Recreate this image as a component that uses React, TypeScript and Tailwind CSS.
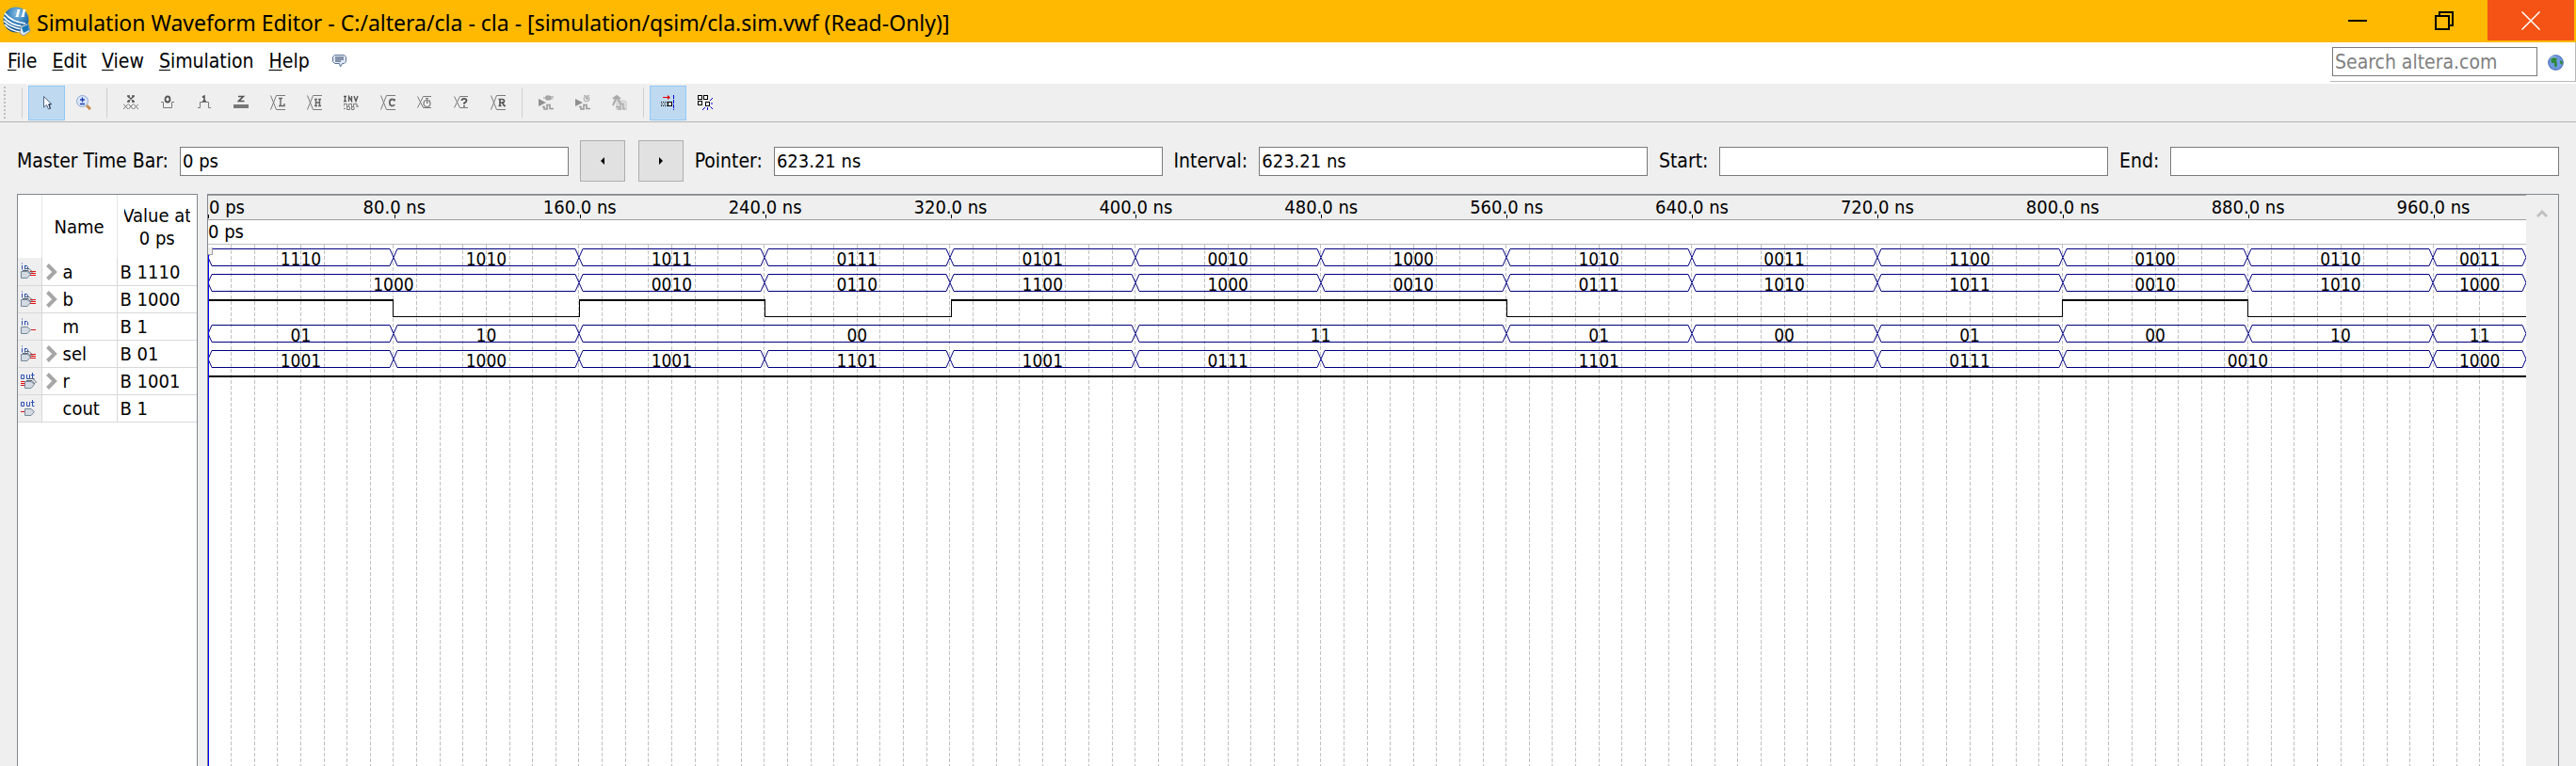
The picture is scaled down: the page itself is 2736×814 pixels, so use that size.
import React from "react";

type Segment = { value: string; span: number };

const seg = (value: string, span = 80): Segment => ({ value, span });

const busA: Segment[] = [
  ...["1110", "1010", "1011", "0111", "0101", "0010", "1000", "1010", "0011", "1100", "0100", "0110"].map((v) => seg(v)),
  seg("0011", 40),
];
const busB: Segment[] = [
  seg("1000", 160),
  ...["0010", "0110", "1100", "1000", "0010", "0111", "1010", "1011", "0010", "1010"].map((v) => seg(v)),
  seg("1000", 40),
];
const bitM: Segment[] = [
  seg("1"), seg("0"), seg("1"), seg("0"), seg("1", 240), seg("0", 240), seg("1"), seg("0", 120),
];
const busSel: Segment[] = [
  seg("01"), seg("10"), seg("00", 240), seg("11", 160), seg("01"), seg("00"), seg("01"), seg("00"), seg("10"), seg("11", 40),
];
const busR: Segment[] = [
  seg("1001"), seg("1000"), seg("1001"), seg("1101"), seg("1001"), seg("0111"), seg("1101", 240), seg("0111"), seg("0010", 160), seg("1000", 40),
];

const signals = [
  { name: "a", value: "B 1110", dir: "in", bus: true },
  { name: "b", value: "B 1000", dir: "in", bus: true },
  { name: "m", value: "B 1", dir: "in", bus: false },
  { name: "sel", value: "B 01", dir: "in", bus: true },
  { name: "r", value: "B 1001", dir: "out", bus: true },
  { name: "cout", value: "B 1", dir: "out", bus: false },
];

function BusRow({ segments }: { segments: Segment[] }) {
  return (
    <div className="flex h-[27px] items-start">
      {segments.map((s, i) => (
        <div key={i} className="flex h-[19px] basis-0" style={{ flexGrow: s.span }}>
          <svg width="4" height="19" viewBox="0 0 4 19" className="shrink-0" stroke="#000080" fill="none">
            <path d="M4 .5 L0 9.5 L4 18.5" />
          </svg>
          <span className="flex-1 border-y border-[#000080] pt-px text-center leading-[18px]">{s.value}</span>
          <svg width="4" height="19" viewBox="0 0 4 19" className="shrink-0" stroke="#000080" fill="none">
            <path d="M0 .5 L4 9.5 L0 18.5" />
          </svg>
        </div>
      ))}
    </div>
  );
}

function BitRow({ segments }: { segments: Segment[] }) {
  return (
    <div className="flex h-[27px] items-start">
      {segments.map((s, i) => (
        <div
          key={i}
          className={
            "h-[19px] basis-0 border-black " +
            (s.value === "1" ? "border-t-2 " : "border-b ") +
            (i > 0 ? "border-l" : "")
          }
          style={{ flexGrow: s.span }}
        />
      ))}
    </div>
  );
}

function Logo() {
  return (
    <svg width="30" height="32" viewBox="0 0 30 32">
      <defs>
        <radialGradient id="ball" cx="0.55" cy="0.25" r="0.8">
          <stop offset="0" stopColor="#8fc3e8" />
          <stop offset="0.5" stopColor="#2f7cb8" />
          <stop offset="1" stopColor="#0a4a86" />
        </radialGradient>
      </defs>
      <circle cx="14" cy="14" r="13.5" fill="url(#ball)" />
      <path d="M1 11 Q8 20 22 21 M1 15 Q8 22 20 24 M2 19 Q9 26 19 27 M2 7 Q9 16 24 18" stroke="#fff" strokeWidth="1.7" fill="none" />
      <path d="M15 3h4l-1 1-1.500 6 .5 1h-4l1-1 1.500-6zM21 3h4l-1 1-1.500 6 .5 1h-4l1-1 1.500-6z" fill="#fff" />
      <path d="M19 21l8-3 2 8-7 5-4-3z" fill="#e4eaf0" stroke="#7d93a8" />
      <path d="M20 22l7-3 1 6-6 3z" fill="#1877b5" />
    </svg>
  );
}

const Icon = ({ children }: { children: React.ReactNode }) => (
  <svg width="16" height="16" viewBox="0 0 16 16" fill="none" stroke="#7a7a7a" strokeWidth="1" aria-hidden="true">
    {children}
  </svg>
);

const Cross = () => <path d="M.5 .5 L6.500 15.500 M6.500 .5 L.5 15.500 M6.500 .5 H16 M6.500 15.500 H16" />;

const toolIcons: Record<string, React.ReactNode> = {
  pointer: (
    <Icon>
      <path d="M4.500 1.500 V13 L7.500 10.500 L9.500 15 L11.500 14 L9.800 9.800 H13 Z" fill="#f8fbff" stroke="#53647f" />
      <path d="M12 10 L9.800 10 L11.500 14.500" stroke="#1c2c48" />
    </Icon>
  ),
  zoom: (
    <Icon>
      <path d="M11 11 L15 15" stroke="#c98a4e" strokeWidth="3" />
      <circle cx="6.500" cy="6.500" r="6" fill="#d9e6f8" stroke="#8fa8d0" />
      <path d="M6.500 2.500 v5 M4 5 h5 M4 9.500 h5" stroke="#1f3fb0" strokeWidth="1.300" />
    </Icon>
  ),
  x: (
    <Icon>
      <path d="M5 1.500 L11 6.500 M11 1.500 L5 6.500 M4 1 H7 M9 1 H12 M4 7 H7 M9 7 H12" stroke="#555" strokeWidth="1.500" />
      <path d="M0 9.500 L5 15 M5 9.500 L0 15 M5.500 9.500 L10.500 15 M10.500 9.500 L5.500 15 M11 9.500 L16 15 M16 9.500 L11 15" />
    </Icon>
  ),
  zero: (
    <Icon>
      <ellipse cx="8" cy="4.500" rx="2.500" ry="3" stroke="#555" strokeWidth="1.800" />
      <path d="M1 7.500 H3.500 V13.500 H12.500 V7.500 H15" />
    </Icon>
  ),
  one: (
    <Icon>
      <path d="M6 2.500 L8 1 V6 M6 6.500 H10" stroke="#555" strokeWidth="1.600" />
      <path d="M1 13.500 H3.500 V7.500 H12.500 V13.500 H15" />
    </Icon>
  ),
  z: (
    <Icon>
      <path d="M5 1.500 H10.500 L5.500 6.500 H11.500" stroke="#555" strokeWidth="1.600" />
      <path d="M0 12 H16" stroke="#777" strokeWidth="4" />
    </Icon>
  ),
  l: (
    <Icon>
      <Cross />
      <path d="M9 3.500 H13 M11 3.500 V11.500 M9 11.500 H15 V9" stroke="#666" strokeWidth="1.400" />
    </Icon>
  ),
  h: (
    <Icon>
      <Cross />
      <path d="M8 4.500 H11 M12 4.500 H15 M9.500 4.500 V11.500 M13.500 4.500 V11.500 M9.500 8 H13.500 M8 11.500 H11 M12 11.500 H15" stroke="#666" strokeWidth="1.400" />
    </Icon>
  ),
  inv: (
    <Icon>
      <path d="M0 1.500 H3 M1.500 1.500 V6.500 M0 6.500 H3 M5.500 7 V1.500 L8.500 6.500 V1 M11 1 L13 6.500 L15 1" stroke="#555" strokeWidth="1.300" />
      <path d="M0 12.500 V9.500 H3.500 V12.500 H5.500 V9.500 H8.500 V12.500 H10.500 V9.500 H14 V12.500 M0 14.500 H2 M3.500 12.500 V15.500 H6.500 V12.500 M8.500 12.500 V15.500 H11 V12.500 M13.500 12 H16" />
    </Icon>
  ),
  c: (
    <Icon>
      <Cross />
      <path d="M15 6 Q14.500 4.500 12.500 4.500 Q9.800 4.500 9.800 8 Q9.800 11.500 12.500 11.500 Q14.500 11.500 15 10 M15 4 V6.500" stroke="#666" strokeWidth="1.800" />
    </Icon>
  ),
  clock: (
    <Icon>
      <path d="M.5 1.500 L6.500 13.500 M6.500 1.500 L.5 13.500 M6.500 1.500 H15 M6.500 13.500 H15" />
      <circle cx="10.500" cy="9" r="3.500" strokeWidth="1.200" />
      <path d="M9 3.500 H12 M10.500 3.500 V9 M13.500 5.500 L12.500 6.500 M10.500 9 L12 7.500" />
    </Icon>
  ),
  q: (
    <Icon>
      <path d="M.5 1.500 L6.500 13.500 M6.500 1.500 L.5 13.500 M6.500 1.500 H15 M6.500 13.500 H15" />
      <path d="M8.500 6 Q8.500 3.800 11 3.800 Q13.500 3.800 13.500 6 Q13.500 7.500 11 8.500 V9.800 M11 11 V12.500" stroke="#555" strokeWidth="1.800" />
    </Icon>
  ),
  r: (
    <Icon>
      <Cross />
      <path d="M8.500 4.500 H12.500 Q14.500 4.500 14.500 6.300 Q14.500 8 12.500 8 H10 M10 4.500 V12 M8.500 11.500 H11.500 M12.500 8 L14.500 11.500 H16" stroke="#555" strokeWidth="1.700" />
    </Icon>
  ),
  runF: (
    <Icon>
      <path d="M0 4 L8 8 L0 12 Z" fill="#909090" stroke="none" />
      <path d="M8 1 H12 Q14 3 12 5 H8 Z M5 3 H8 M12 2 H16 M12 4 H15" fill="#aaa" stroke="#999" />
      <path d="M4 12.500 H6 V15 H9 V10.500 H12 V14.500 H16" stroke="#999" strokeWidth="1.600" />
    </Icon>
  ),
  runT: (
    <Icon>
      <path d="M0 4 L8 8 L0 12 Z" fill="#909090" stroke="none" />
      <circle cx="12" cy="4" r="3" fill="#e4e4e4" stroke="#aaa" />
      <path d="M12 2 V4 H13.500 M9.500 0 L10.500 1 M14.500 0 L13.500 1" />
      <path d="M4 12.500 H6 V15 H9 V10.500 H12 V14.500 H16" stroke="#999" strokeWidth="1.600" />
    </Icon>
  ),
  build: (
    <Icon>
      <path d="M5 6 H14 L16 8 V16 H5 Z" fill="#ddd" stroke="#ccc" />
      <path d="M1 4 L5 1 L9 4 M5 2 L1 11 M5 2 L9 9" stroke="#aaa" strokeWidth="2" />
      <path d="M4 12.500 H7 V15 H9 V9.500 H12 V14.500 H14" stroke="#aaa" strokeWidth="1.400" />
    </Icon>
  ),
  snapEdge: (
    <Icon>
      <path d="M2 2.500 H8" stroke="#e00000" />
      <path d="M7 0 L10 2.500 L7 5 Z" fill="#e00000" stroke="none" />
      <path d="M0 7.500 H8 M0 11.500 H8" stroke="#000" strokeDasharray="1 1" />
      <path d="M0 9.500 H8" stroke="#555" strokeDasharray="2 1" />
      <rect x="7.500" y="7.500" width="4" height="4" fill="#fff" stroke="#000" />
      <path d="M13.500 0 V16" stroke="#0000e0" strokeDasharray="4 1" />
    </Icon>
  ),
  snapGrid: (
    <Icon>
      <g stroke="#000">
        <rect x=".5" y=".5" width="4" height="4" fill="#fff" />
        <rect x="6.500" y=".5" width="4" height="4" fill="#fff" />
        <rect x=".5" y="6.500" width="4" height="4" fill="#fff" />
        <rect x="8.500" y="7.500" width="4" height="4" fill="#fff" />
      </g>
      <path d="M13 6 L16 3 M14 9 H16 M13.500 12.500 L16 15 M10.500 13 V16 M8 13 L5 16" stroke="#0000e0" />
    </Icon>
  ),
};

function ToolButton({ icon, label, active = false }: { icon: string; label: string; active?: boolean }) {
  return (
    <button
      type="button"
      aria-label={label}
      className={
        "flex h-[37px] w-[39px] items-center justify-center border " +
        (active ? "border-[#90c8f6] bg-[#bfdaf0]" : "border-transparent")
      }
    >
      {toolIcons[icon]}
    </button>
  );
}

const Separator = ({ className = "" }: { className?: string }) => (
  <div className={"h-8 w-px bg-[#cfcfcf] " + className} />
);

function PinIcon({ dir, bus }: { dir: string; bus: boolean }) {
  const isIn = dir === "in";
  const x = isIn ? 0 : 4;
  return (
    <svg width="18" height="18" viewBox="0 0 18 18" className="mx-auto" fill="none">
      <g stroke="#2c4fb0">
        {isIn ? (
          <path d="M1.500 3 V7.500 M1.500 .5 V1.500 M4.500 7.500 V3 M4.500 3.500 H6.500 L7.500 4.500 V7.500" />
        ) : (
          <path d="M.5 2.500 H3.500 V6.500 H.5 Z M6.500 2 V6.500 H9.500 V2 M12.500 0 V6.500 H14.500 M11 2.500 H14.500" />
        )}
      </g>
      {isIn ? (
        <path d={bus ? "M10 9.500 H16 M11 11.500 H16 M10 13.500 H16" : "M11 12.500 H16"} stroke="#e01010" />
      ) : (
        <path d={bus ? "M0 9.500 H5 M0 11.500 H5 M0 13.500 H5" : "M0 12.500 H5"} stroke="#e01010" />
      )}
      {bus && (
        <path
          d={`M${x + 4} 6.500 H${x + 9} L${x + 12} 9.500 V11 M${x + 2} 8.500 H${x + 8} L${x + 11} 12`}
          stroke="#5a6876"
        />
      )}
      <path
        d={`M${x + 0.5} 9.500 H${x + 7} L${x + 10.5} 12.500 L${x + 7} 16.500 H${x + 0.5} Z`}
        fill="#d3dae2"
        stroke="#76889a"
      />
    </svg>
  );
}

const inputClass = "h-[31px] min-w-0 border border-[#7a7a7a] bg-white px-[2px] outline-none";

function Field({ id, label, value }: { id: string; label: string; value: string }) {
  return (
    <>
      <label htmlFor={id} className="whitespace-nowrap text-[21px]">{label}</label>
      <input id={id} defaultValue={value} className={inputClass + " flex-1 basis-0"} />
    </>
  );
}

const menus = ["File", "Edit", "View", "Simulation", "Help"];
const ticks = Array.from({ length: 12 }, (_, i) => (i + 1) * 80);

export default function App() {
  return (
    <div className="flex h-screen flex-col overflow-hidden bg-[#efefef] font-['DejaVu_Sans_Condensed','DejaVu_Sans',sans-serif] text-[20px] leading-6 text-black">
      <header className="flex h-[45px] shrink-0 bg-[#ffb900] pr-[2px] font-['Noto_Sans',sans-serif]">
        <div className="flex flex-1 items-center gap-[6px] pl-[3px] text-[23px]">
          <Logo />
          <h1 className="pt-[2px]">Simulation Waveform Editor - C:/altera/cla - cla - [simulation/qsim/cla.sim.vwf (Read-Only)]</h1>
        </div>
        <button type="button" aria-label="Minimize" className="flex h-[43px] w-[92px] items-center justify-center">
          <svg width="20" height="20" viewBox="0 0 20 20"><path d="M0 10 H20" stroke="#000" strokeWidth="2" /></svg>
        </button>
        <button type="button" aria-label="Restore" className="flex h-[43px] w-[92px] items-center justify-center">
          <svg width="20" height="20" viewBox="0 0 20 20" fill="none" stroke="#000" strokeWidth="2">
            <path d="M1 5 H15 V19 H1 Z M5 5 V1 H19 V15 H15" />
          </svg>
        </button>
        <button type="button" aria-label="Close" className="flex h-[43px] w-[92px] items-center justify-center bg-[#f45315]">
          <svg width="20" height="20" viewBox="0 0 20 20"><path d="M.5 .5 L19.500 19.500 M19.500 .5 L.5 19.500" stroke="#fff" strokeWidth="1.500" /></svg>
        </button>
      </header>

      <div className="flex h-11 shrink-0 items-start border-b-2 border-white bg-white">
        <nav className="flex flex-1 items-center gap-4 pl-2 pt-2 text-[21px]">
          {menus.map((m) => (
            <button key={m} type="button">
              <span className="underline decoration-1 underline-offset-2">{m[0]}</span>
              {m.slice(1)}
            </button>
          ))}
          <button type="button" aria-label="Feedback" className="ml-2">
            <svg width="16" height="14" viewBox="0 0 16 14">
              <path d="M2.500 .5 H12.500 L14.500 2.500 V7.500 L12.500 9.500 H10.500 L8.500 13 L7.500 9.500 H2.500 L.5 7.500 V2.500 Z" fill="#dce6f6" stroke="#5f7396" />
              <path d="M3 3 H12 M3 5 H12 M3 7 H9" stroke="#2c3e60" />
            </svg>
          </button>
        </nav>
        <div className="flex h-[42px] items-start gap-[11px] border-b border-r border-[#b8b8b8] pl-[2px] pr-3 pt-[5px]">
          <input aria-label="Search altera.com" placeholder="Search altera.com" className={inputClass + " w-[218px] text-[21px] placeholder:text-[#808080]"} />
          <button type="button" aria-label="Web search" className="mt-2">
            <svg width="17" height="17" viewBox="0 0 17 17">
              <circle cx="8.500" cy="8.500" r="7.800" fill="#6f9ae0" stroke="#3a5fae" />
              <circle cx="6" cy="5" r="3.500" fill="#a9c8f4" opacity=".7" />
              <path d="M3 5 L6 3 L10 4 L9 7 L10 10 L9 14 L7 12 L7 9 L4 9 Z M13 6 L16 8 L15 11 L13 9 Z" fill="#2e8a3a" />
            </svg>
          </button>
        </div>
      </div>

      <div className="flex h-[41px] shrink-0 items-center border-b border-[#b4b4b4] pl-1">
        <div className="h-[35px] w-[2px] bg-[repeating-linear-gradient(to_bottom,#bdbdbd_0_2px,transparent_2px_4px)]" />
        <Separator className="ml-[17px] mr-[6px]" />
        <ToolButton icon="pointer" label="Selection tool" active />
        <ToolButton icon="zoom" label="Zoom tool" />
        <Separator className="ml-[5px] mr-[5px]" />
        <ToolButton icon="x" label="Forcing unknown" />
        <ToolButton icon="zero" label="Forcing low" />
        <ToolButton icon="one" label="Forcing high" />
        <ToolButton icon="z" label="High impedance" />
        <ToolButton icon="l" label="Weak low" />
        <ToolButton icon="h" label="Weak high" />
        <ToolButton icon="inv" label="Invert" />
        <ToolButton icon="c" label="Count value" />
        <ToolButton icon="clock" label="Overwrite clock" />
        <ToolButton icon="q" label="Arbitrary value" />
        <ToolButton icon="r" label="Random values" />
        <Separator className="ml-[6px] mr-[5px]" />
        <ToolButton icon="runF" label="Run functional simulation" />
        <ToolButton icon="runT" label="Run timing simulation" />
        <ToolButton icon="build" label="Generate testbench" />
        <Separator className="ml-[6px] mr-[6px]" />
        <ToolButton icon="snapEdge" label="Snap to transition" active />
        <ToolButton icon="snapGrid" label="Snap to grid" />
      </div>

      <div className="flex h-[76px] shrink-0 items-center gap-3 px-[18px] pt-[6px]">
        <Field id="master" label="Master Time Bar:" value="0 ps" />
        <div className="flex gap-[14px]">
          <button type="button" aria-label="Previous transition" className="flex h-11 w-12 items-center justify-center border border-[#adadad] bg-[#e1e1e1]">
            <svg width="4" height="8" viewBox="0 0 4 8"><path d="M4 0 L0 4 L4 8 Z" /></svg>
          </button>
          <button type="button" aria-label="Next transition" className="flex h-11 w-12 items-center justify-center border border-[#adadad] bg-[#e1e1e1]">
            <svg width="4" height="8" viewBox="0 0 4 8"><path d="M0 0 L4 4 L0 8 Z" /></svg>
          </button>
        </div>
        <Field id="pointer" label="Pointer:" value="623.21 ns" />
        <Field id="interval" label="Interval:" value="623.21 ns" />
        <Field id="start" label="Start:" value="" />
        <Field id="end" label="End:" value="" />
      </div>

      <main className="flex min-h-0 flex-1 gap-[10px] pl-[18px] pr-[18px]">
        <section className="w-48 shrink-0 border-x border-t border-[#828790] bg-white">
          <table className="w-full table-fixed border-collapse">
            <colgroup>
              <col className="w-[25px]" />
              <col className="w-20" />
              <col />
            </colgroup>
            <thead>
              <tr className="h-[67px]">
                <th className="border-r border-[#e5e5e5]" aria-label="Type" />
                <th className="border-r border-[#e5e5e5] font-normal">Name</th>
                <th className="p-0 font-normal">
                  <span className="mx-auto flex w-[70px] justify-center overflow-hidden whitespace-nowrap">Value at</span>
                  <span>0 ps</span>
                </th>
              </tr>
            </thead>
            <tbody>
              {signals.map((s) => (
                <tr key={s.name} className="h-[29px]">
                  <td className="border-b border-r border-[#d8d8d8] bg-[#efefef] p-0"><PinIcon dir={s.dir} bus={s.bus} /></td>
                  <td className="border-b border-r border-[#d8d8d8] p-0 pt-px">
                    <div className="flex items-center pl-1">
                      <span className="w-[18px]">
                        {s.bus && (
                          <svg width="12" height="18" viewBox="0 0 12 18" fill="none" stroke="#a6a6a6" strokeWidth="4">
                            <path d="M1.500 1.500 L9 9 L1.500 16.500" />
                          </svg>
                        )}
                      </span>
                      {s.name}
                    </div>
                  </td>
                  <td className="border-b border-[#d8d8d8] p-0 pl-[3px] pt-px">{s.value}</td>
                </tr>
              ))}
            </tbody>
          </table>
        </section>

        <section className="flex min-w-0 flex-1 border-x border-t border-[#828790]">
          <div className="flex min-w-0 flex-1 flex-col bg-white">
            <div className="flex h-[27px] shrink-0 border-b border-t border-[#a0a0a0] bg-[#efefef] leading-[25px]">
              <span className="relative basis-0 pl-px" style={{ flexGrow: 40 }}>
                0 ps
                <i className="absolute bottom-[1px] left-0 h-1 w-px bg-black" />
              </span>
              {ticks.map((t) => (
                <span key={t} className="relative basis-0 text-center" style={{ flexGrow: 80 }}>
                  {t}.0 ns
                  <i className="absolute bottom-[1px] left-1/2 h-1 w-px bg-black" />
                </span>
              ))}
            </div>
            <div className="h-[26px] shrink-0 border-b border-[#c0c0c0] leading-6">0 ps</div>
            <div className="relative min-h-0 flex-1">
              <svg className="absolute inset-0 h-full w-full" stroke="#c0c0c0" shapeRendering="crispEdges">
                {Array.from({ length: 99 }, (_, i) => (
                  <line key={i} x1={`${i + 1}%`} x2={`${i + 1}%`} y1="0" y2="100%" strokeDasharray="4 2" />
                ))}
              </svg>
              <div className="relative pt-1 text-[19px]">
                <BusRow segments={busA} />
                <BusRow segments={busB} />
                <BitRow segments={bitM} />
                <BusRow segments={busSel} />
                <BusRow segments={busR} />
                <BitRow segments={[seg("1", 1000)]} />
              </div>
              <div className="absolute bottom-0 left-0 top-2 w-px bg-[#0000ff]" />
              <div className="absolute left-0 top-[3px] h-2 w-[5px] border-b border-r border-[#a0a0a0] bg-[#efefef]" />
            </div>
          </div>
          <div className="flex w-[34px] shrink-0 justify-center bg-[#efefef] pt-[15px]">
            <svg width="12" height="10" viewBox="0 0 12 10" fill="none" stroke="#bfbfbf" strokeWidth="3">
              <path d="M1 8 L6 3 L11 8" />
            </svg>
          </div>
        </section>
      </main>
    </div>
  );
}
